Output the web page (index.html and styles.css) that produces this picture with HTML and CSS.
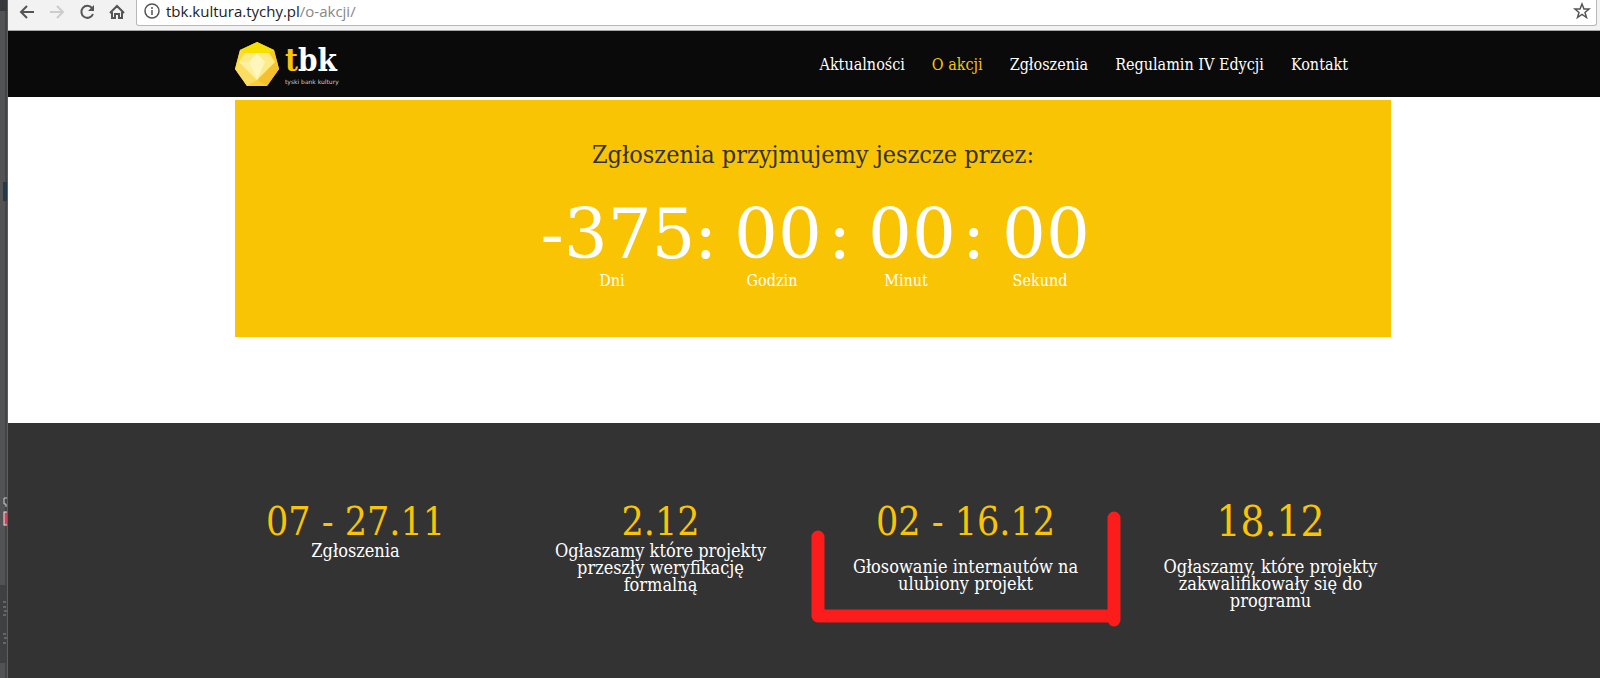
FILE: index.html
```html
<!DOCTYPE html>
<html lang="pl">
<head>
<meta charset="UTF-8">
<meta name="viewport" content="width=device-width, initial-scale=1.0">
<title>O akcji - Tyski Bank Kultury</title>
<link rel="stylesheet" href="styles.css">
</head>
<body>
    <div class="desktop-edge">
        <svg width="8" height="678" viewBox="0 0 8 678">
            <rect width="7" height="11" fill="#35383c"/>
            <rect x="5" y="11" width="2" height="667" fill="#424446"/>
            <rect x="3" y="182" width="4" height="19" fill="#263746"/>
            <path d="M7 498H4v6h2v3" fill="none" stroke="#c8ccd0"/>
            <rect x="4" y="512" width="4" height="13" fill="#c8445c" stroke="#e8e0dc"/>
            <rect y="585" width="7" height="78" fill="#3e4042"/>
            <path d="M3 602h3M3 607h3M4 611h3M3 615h3M3 634h3M4 638h3M3 643h3" stroke="#8a8c8e"/>
            <rect x="7" width="1" height="678" fill="#35689f"/>
        </svg>
    </div>

    <div class="browser">
        <div class="toolbar">
            <button type="button" aria-label="Wstecz"><svg width="16" height="16" viewBox="0 0 16 16"><path d="M15 8H2M8 2L2 8l6 6"/></svg></button>
            <button type="button" aria-label="Dalej" disabled><svg width="16" height="16" viewBox="0 0 16 16"><path d="M1 8h13M8 2l6 6-6 6"/></svg></button>
            <button type="button" aria-label="Odśwież"><svg width="16" height="16" viewBox="0 0 16 16"><path d="M13 4a6 6 0 1 0 1 6"/><path d="M15 1v6H9z" class="solid"/></svg></button>
            <button type="button" aria-label="Strona startowa"><svg width="16" height="16" viewBox="0 0 16 16"><path d="M1 9l7-7 7 7M3 8v6h3v-4h4v4h3V8"/></svg></button>
            <div class="address">
                <svg width="16" height="16" viewBox="0 0 16 16"><circle cx="8" cy="8" r="7"/><path d="M8 7v5M8 4v2"/></svg>
                <span class="url">tbk.kultura.tychy.pl<span class="path">/o-akcji/</span></span>
                <svg width="16" height="16" viewBox="0 0 16 16"><path d="M8 1l2 5h5l-4 3.400 1.500 5.100L8 11.500l-4.500 3L5 9.400 1 6h5z"/></svg>
            </div>
        </div>

        <header class="site-header">
            <div class="container header-row">
                <a href="#" class="logo">
                    <svg width="44" height="44" viewBox="0 0 44 44">
                        <path d="M22 0l17 8 5 19-12 17H12L0 27 5 8z" fill="#f9cf35"/>
                        <path d="M22 0l17 8-5 3H10L5 8z" fill="#f5e000"/>
                        <path d="M5 8l5 3-6 9-4 7z" fill="#fbdc3a"/>
                        <path d="M39 8l-5 3 6 9 4 7z" fill="#f8c928"/>
                        <path d="M4 20l18 18L12 44 0 27z" fill="#fbdd62"/>
                        <path d="M40 20L22 38l10 6 12-17z" fill="#f5c02d"/>
                        <path d="M10 11h24l6 9-18 18L4 20z" fill="#fdeb87"/>
                        <path d="M14 20l8-9 8 9-8 18z" fill="#fff6bd"/>
                        <path d="M4 20h10l8 18z" fill="#fdf0a0"/>
                    </svg>
                    <span class="logo-text">
                        <strong><span>t</span>bk</strong>
                        <small>tyski bank kultury</small>
                    </span>
                </a>
                <nav>
                    <a href="#">Aktualności</a>
                    <a href="#" class="active">O akcji</a>
                    <a href="#">Zgłoszenia</a>
                    <a href="#">Regulamin IV Edycji</a>
                    <a href="#">Kontakt</a>
                </nav>
            </div>
        </header>

        <main>
            <section class="container countdown">
                <h1>Zgłoszenia przyjmujemy jeszcze przez:</h1>
                <div class="timer">
                    <div class="unit days"><b>-375</b><span>Dni</span></div>
                    <i>:</i>
                    <div class="unit"><b>00</b><span>Godzin</span></div>
                    <i>:</i>
                    <div class="unit"><b>00</b><span>Minut</span></div>
                    <i>:</i>
                    <div class="unit"><b>00</b><span>Sekund</span></div>
                </div>
            </section>
        </main>

        <section class="schedule">
            <div class="dates">
                <div class="date">
                    <h2>07 - 27.11</h2>
                    <p>Zgłoszenia</p>
                </div>
                <div class="date">
                    <h2>2.12</h2>
                    <p>Ogłaszamy które projekty przeszły weryfikację formalną</p>
                </div>
                <div class="date spaced">
                    <h2>02 - 16.12</h2>
                    <p>Głosowanie internautów na ulubiony projekt</p>
                    <svg class="marker" width="312" height="118" viewBox="0 0 312 118">
                        <path d="M8 26v79H304M304 7v102"/>
                    </svg>
                </div>
                <div class="date spaced large">
                    <h2>18.12</h2>
                    <p>Ogłaszamy, które projekty zakwalifikowały się do programu</p>
                </div>
            </div>
        </section>
    </div>
</body>
</html>
```
FILE: styles.css
```css
* {
    box-sizing: border-box;
}
body {
    margin: 0;
    display: flex;
    min-height: 100vh;
    font-family: "DejaVu Serif Condensed", "DejaVu Serif", serif;
    font-stretch: condensed;
    background: #fff;
}
a {
    color: inherit;
    text-decoration: none;
}
h1, h2, p {
    margin: 0;
    font-weight: normal;
}

/* strip of the desktop behind the window */
.desktop-edge {
    position: relative;
    flex: 0 0 8px;
    background: #515355;
    overflow: hidden;
}
.desktop-edge svg {
    position: absolute;
    top: 0;
    left: 0;
}
.browser {
    flex: 1;
    min-width: 0;
    display: flex;
    flex-direction: column;
}

/* browser toolbar */
.toolbar {
    display: flex;
    align-items: flex-start;
    gap: 14px;
    height: 31px;
    padding: 0 3px 0 11px;
    background: #f2f2f2;
    border-bottom: 1px solid #a5a7a7;
}
.toolbar button {
    width: 16px;
    height: 22px;
    padding: 2px 0 0;
    border: 0;
    background: none;
}
.toolbar svg {
    display: block;
    flex: none;
    fill: none;
    stroke: #555;
    stroke-width: 2;
    overflow: visible;
}
.toolbar button:disabled svg {
    stroke: #ccc;
}
.toolbar svg .solid {
    fill: #555;
    stroke: none;
}
.address {
    flex: 1;
    display: flex;
    align-items: center;
    gap: 6px;
    height: 26px;
    margin-left: -3px;
    padding: 0 6px 4px 7px;
    background: #fff;
    border: 1px solid #b8b8b8;
    border-top: 0;
    border-radius: 0 0 3px 3px;
}
.toolbar .address svg {
    stroke-width: 1.500;
}
.url {
    flex: 1;
    font: 15px/22px "Open Sans", sans-serif;
    color: #222;
}
.path {
    color: #888;
}

/* header */
.site-header, main {
    padding-left: 18px;
}
.site-header {
    background: #0a0a0a;
    color: #fff;
}
.container {
    max-width: 1156px;
    margin: 0 auto;
}
.header-row {
    display: flex;
    align-items: center;
    justify-content: space-between;
    height: 66px;
    padding-right: 43px;
}
.logo {
    display: flex;
    align-items: center;
    gap: 6px;
}
.logo-text strong {
    display: block;
    font-size: 31px;
    line-height: 36px;
}
.logo-text strong span {
    color: #f9c404;
}
.logo-text small {
    display: block;
    font: 6px/8px "DejaVu Sans", sans-serif;
    color: #ccc;
}
nav {
    display: flex;
    gap: 27px;
    font-size: 16px;
}
nav .active {
    color: #f9c404;
}

/* countdown */
main {
    padding-top: 3px;
    padding-bottom: 86px;
}
.countdown {
    padding: 39px 0 46px;
    background: #f9c404;
    text-align: center;
    color: #fff;
}
.countdown h1 {
    font-size: 25px;
    line-height: 32px;
    color: #333;
}
.timer {
    display: flex;
    justify-content: center;
    margin-top: 28px;
    padding-left: 12px;
}
.unit {
    width: 100px;
}
.unit.days {
    width: 152px;
}
.unit b, .timer i {
    display: block;
    font-family: "DejaVu Serif", serif;
    font-stretch: normal;
    font-size: 69px;
    font-weight: normal;
    font-style: normal;
    line-height: 70px;
}
.timer i {
    width: 34px;
    text-align: left;
}
.unit b {
    display: flex;
    justify-content: center;
}
.unit span {
    display: block;
    margin-top: 2px;
    padding-right: 12px;
    font-size: 16px;
    line-height: 20px;
}

/* schedule */
.schedule {
    flex: 1;
    padding: 78px 0 50px 18px;
    background: #333;
    color: #fff;
    text-align: center;
}
.dates {
    display: grid;
    grid-template-columns: repeat(4, 1fr);
    max-width: 1220px;
    margin: 0 auto;
}
.date {
    position: relative;
    padding: 0 36px;
}
.date h2 {
    font-size: 39px;
    line-height: 41px;
    color: #f9c404;
    white-space: nowrap;
}
.date.large h2 {
    font-size: 42px;
}
.date p {
    font-size: 18px;
    line-height: 17px;
}
.date.spaced p {
    margin-top: 16px;
}
.marker {
    position: absolute;
    top: 10px;
    left: -3px;
    fill: none;
    stroke: #fc1c1c;
    stroke-width: 13;
    stroke-linecap: round;
    stroke-linejoin: round;
}
```
